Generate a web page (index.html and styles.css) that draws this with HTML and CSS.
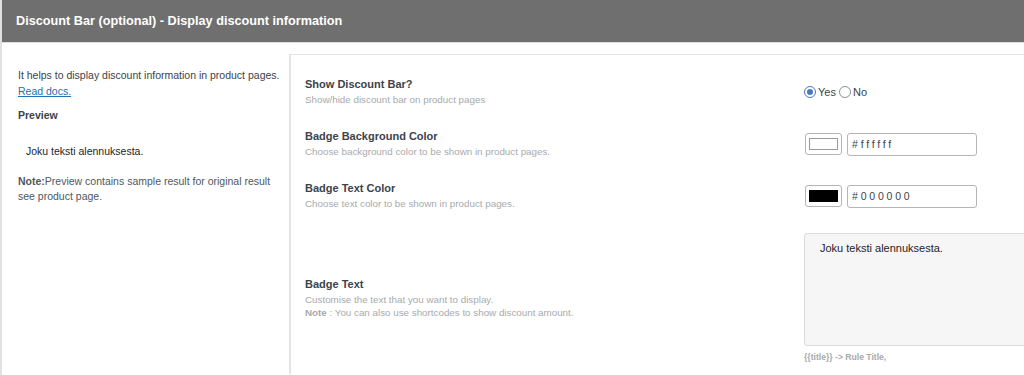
FILE: index.html
```html
<!DOCTYPE html>
<html lang="en">

<head>
    <meta charset="UTF-8">
    <meta name="viewport" content="width=device-width, initial-scale=1.0">
    <title>Discount Bar settings</title>
    <link rel="stylesheet" href="styles.css">
</head>

<body>

    <div class="settings">
        <div class="settings-header">
            <h2>Discount Bar (optional) - Display discount information</h2>
        </div>

        <div class="settings-body">
            <!-- help + preview -->
            <aside class="side">
                <p>It helps to display discount information in product pages.<br><a href="#">Read docs.</a></p>
                <h4>Preview</h4>
                <div class="preview">Joku teksti alennuksesta.</div>
                <p class="side-note"><b>Note:</b>Preview contains sample result for original result see product page.</p>
            </aside>

            <!-- fields -->
            <div class="panel">
                <div class="field-row">
                    <div class="field-label">
                        <h3>Show Discount Bar?</h3>
                        <p>Show/hide discount bar on product pages</p>
                    </div>
                    <div class="field-control">
                        <label class="radio"><input type="radio" name="show" checked> Yes</label>
                        <label class="radio"><input type="radio" name="show"> No</label>
                    </div>
                </div>

                <div class="field-row">
                    <div class="field-label">
                        <h3>Badge Background Color</h3>
                        <p>Choose background color to be shown in product pages.</p>
                    </div>
                    <div class="field-control">
                        <span class="swatch"><span class="swatch-fill swatch-white"></span></span>
                        <input class="color-text" type="text" value="#ffffff">
                    </div>
                </div>

                <div class="field-row">
                    <div class="field-label">
                        <h3>Badge Text Color</h3>
                        <p>Choose text color to be shown in product pages.</p>
                    </div>
                    <div class="field-control">
                        <span class="swatch"><span class="swatch-fill swatch-black"></span></span>
                        <input class="color-text" type="text" value="#000000">
                    </div>
                </div>

                <div class="field-row">
                    <div class="field-label">
                        <h3>Badge Text</h3>
                        <p>Customise the text that you want to display.<br><b>Note</b> : You can also use shortcodes to show discount amount.</p>
                    </div>
                    <div class="field-control field-stack">
                        <textarea class="badge-text">Joku teksti alennuksesta.</textarea>
                        <span class="hint">{{title}} -&gt; Rule Title,</span>
                    </div>
                </div>
            </div>
        </div>
    </div>

</body>

</html>
```

FILE: styles.css
```css
body {
    font-family: 'Liberation Sans', Arial, sans-serif;
    background-color: #fff;
    color: #3c434a;
    margin: 0;
    padding: 0;
    overflow: hidden;
}

.settings {
    border-left: 2px solid #e2e2e2;
    min-height: 375px;
}

.settings-header {
    background-color: #6f6f6f;
    border-bottom: 1px solid #dcdcdc;
    height: 42px;
    display: flex;
    align-items: center;
    padding-left: 14px;
}

.settings-header h2 {
    margin: 0;
    color: #fff;
    font-size: 12.7px;
    font-weight: 700;
}

.settings-body {
    display: flex;
    padding-top: 11px;
}

.side {
    width: 271px;
    padding: 13px 0 0 16px;
    font-size: 10.5px;
    line-height: 16px;
    flex-shrink: 0;
}

.side p {
    margin: 0;
}

.side a {
    color: #2271b1;
}

.side h4 {
    margin: 8px 0 0;
    font-size: 10.5px;
    font-weight: 700;
}

.preview {
    padding: 20px 0 15px 8px;
    color: #1d2327;
}

.side-note {
    color: #50575e;
    line-height: 15px;
}

.panel {
    flex: 1;
    border-left: 2px solid #e4e4e4;
    border-top: 1px solid #e4e4e4;
    padding: 11px 0 0 14px;
    overflow: hidden;
}

.field-row {
    display: grid;
    grid-template-columns: 499px 1fr;
    align-items: center;
    padding: 10px 0;
    min-height: 32px;
}

.field-label {
    margin-top: -2px;
}

.field-label h3 {
    margin: 0;
    font-size: 11px;
    line-height: 16px;
    font-weight: 700;
    color: #3c434a;
}

.field-label p {
    margin: 1px 0 0;
    font-size: 9.8px;
    line-height: 13px;
    color: #a7aaad;
}

.field-label p b {
    font-weight: 700;
}

.field-control {
    display: flex;
    align-items: center;
}

.radio {
    display: flex;
    align-items: center;
    font-size: 11px;
    color: #3c434a;
    margin-right: 3px;
}

.radio input {
    appearance: none;
    width: 12px;
    height: 12px;
    margin: 0 2px 0 0;
    border: 1px solid #8c8f94;
    border-radius: 50%;
    background: #fff;
    display: grid;
    place-items: center;
}

.radio input:checked {
    border-color: #4a78c2;
}

.radio input:checked::before {
    content: "";
    width: 6px;
    height: 6px;
    border-radius: 50%;
    background-color: #4a78c2;
}

.swatch {
    width: 35px;
    height: 20px;
    border: 1px solid #b5b5b5;
    border-radius: 3px;
    display: flex;
    align-items: center;
    justify-content: center;
    margin: 0 5px 0 1px;
    background: #fff;
}

.swatch-fill {
    width: 29px;
    height: 12px;
}

.swatch-white {
    border: 1px solid #9a9a9a;
    width: 27px;
    height: 10px;
}

.swatch-black {
    background-color: #000;
}

.color-text {
    width: 130px;
    height: 23px;
    box-sizing: border-box;
    padding: 0 0 0 4px;
    border: 1px solid #b5b5b5;
    border-radius: 3px;
    font-family: inherit;
    font-size: 10.5px;
    letter-spacing: 2.8px;
    color: #3c434a;
}

.field-stack {
    flex-direction: column;
    align-items: flex-start;
}

.badge-text {
    width: 300px;
    height: 113px;
    box-sizing: border-box;
    margin: 1px 0 0;
    padding: 8px 15px;
    border: 1px solid #dcdcdc;
    border-radius: 3px;
    background-color: #f6f6f6;
    font-family: inherit;
    font-size: 11px;
    color: #1d2327;
    resize: none;
}

.hint {
    margin-top: 4px;
    font-size: 8.6px;
    line-height: 14px;
    font-weight: 700;
    color: #a7aaad;
}
```
